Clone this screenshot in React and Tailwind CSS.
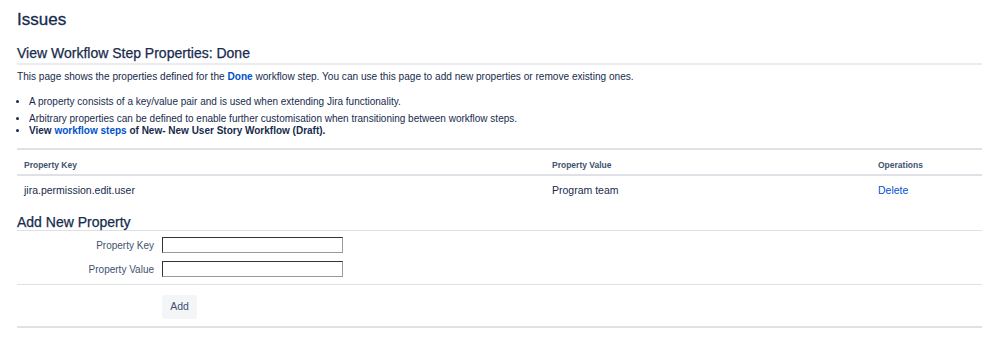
import React from 'react';

const font = { fontFamily: '"Liberation Sans", Arial, sans-serif' };

function App() {
  return (
    <div className="min-h-screen bg-white text-[#172b4d] px-[17px]" style={font}>
      <h1 className="pt-[8px] text-[17px] leading-[24px] [-webkit-text-stroke:0.3px]">Issues</h1>

      <h2 className="mt-[11px] text-[14px] leading-[20px] border-b-2 border-[#ebecf0] [-webkit-text-stroke:0.25px]">
        View Workflow Step Properties: Done
      </h2>

      <p className="mt-[4px] text-[10.1px] leading-[16px]">
        This page shows the properties defined for the{' '}
        <a className="text-[#0052cc] font-bold">Done</a> workflow step. You can use this page to add new
        properties or remove existing ones.
      </p>

      <ul className="mt-[11px] list-disc pl-[12px] text-[10px] leading-[12px]">
        <li className="mb-[5px]">A property consists of a key/value pair and is used when extending Jira functionality.</li>
        <li>Arbitrary properties can be defined to enable further customisation when transitioning between workflow steps.</li>
        <li className="font-bold">
          View <a className="text-[#0052cc]">workflow steps</a> of New- New User Story Workflow (Draft).
        </li>
      </ul>

      <div className="mt-[11px] border-t-2 border-[#dfe1e6]">
        <div className="grid grid-cols-[535px_326px_1fr] border-b-2 border-[#dfe1e6] text-[8.5px] font-bold leading-[12px] text-[#42526e]">
          <div className="pl-[7px] pt-[9px] pb-[3px]">Property Key</div>
          <div className="pt-[9px] pb-[3px]">Property Value</div>
          <div className="pt-[9px] pb-[3px]">Operations</div>
        </div>
        <div className="grid grid-cols-[535px_326px_1fr] text-[10.5px] leading-[16px]">
          <div className="pl-[7px] pt-[6px] pb-[6px]">jira.permission.edit.user</div>
          <div className="pt-[6px] pb-[6px]">Program team</div>
          <div className="pt-[6px] pb-[6px]">
            <a className="text-[#0052cc]">Delete</a>
          </div>
        </div>
      </div>

      <h3 className="mt-[10px] text-[14px] leading-[16px] border-b border-[#dfe1e6] [-webkit-text-stroke:0.25px]">
        Add New Property
      </h3>

      <div className="border-b border-[#dfe1e6] pt-[5px] pb-[6px] text-[10px] text-[#42526e]">
        <div className="flex items-center h-[18px]">
          <label className="w-[145px] text-right pr-[8px]">Property Key</label>
          <input className="w-[181px] h-[16px] border border-[#333] border-r-[#999] border-b-[#999] bg-white" />
        </div>
        <div className="flex items-center h-[18px] mt-[6px]">
          <label className="w-[145px] text-right pr-[8px]">Property Value</label>
          <input className="w-[181px] h-[16px] border border-[#333] border-r-[#999] border-b-[#999] bg-white" />
        </div>
      </div>

      <div className="border-b-2 border-[#dfe1e6] pt-[8px] pb-[7px] pl-[145px]">
        <button className="h-[24px] w-[35px] rounded-[3px] bg-[#f4f5f7] text-[10.5px] text-[#42526e]">Add</button>
      </div>
    </div>
  );
}

export default App;
